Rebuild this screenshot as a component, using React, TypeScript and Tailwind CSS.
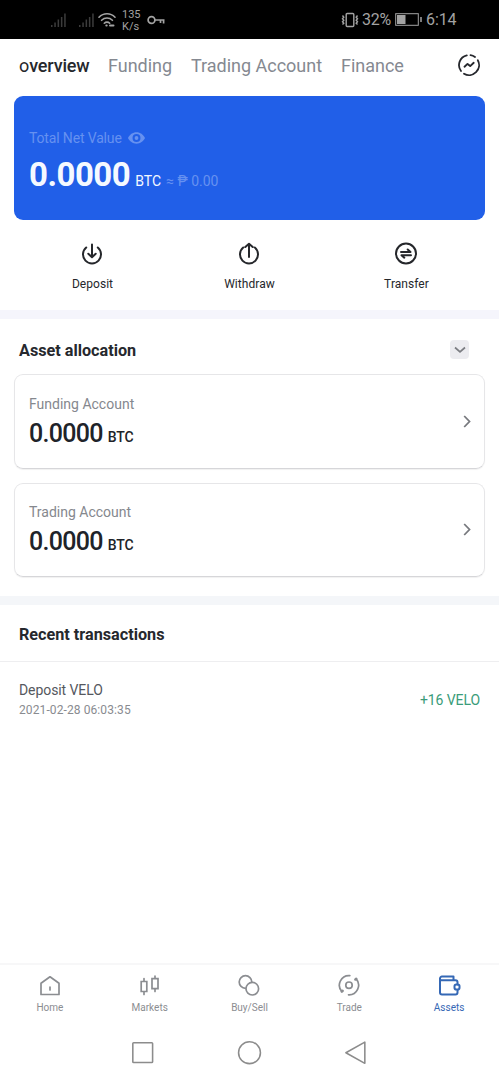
import type { ReactNode } from 'react'

const TABS = ['Funding', 'Trading Account', 'Finance']

const ACCOUNTS = [
  { name: 'Funding Account', amount: '0.0000' },
  { name: 'Trading Account', amount: '0.0000' },
]

interface IconProps {
  className?: string
  children: ReactNode
}

function Icon({ className = 'h-6 w-6', children }: IconProps) {
  return (
    <svg
      viewBox="0 0 24 24"
      className={className}
      fill="none"
      stroke="currentColor"
      strokeWidth={2}
      strokeLinecap="round"
      strokeLinejoin="round"
    >
      {children}
    </svg>
  )
}

function Signal() {
  return (
    <svg viewBox="0 0 16 16" className="h-4 w-4 text-[#3c3c3c]" fill="currentColor">
      <path d="M0 13h1.500v2H0zM3.300 10.500h1.500v4.500H3.300zM6.600 7.500h1.500V15H6.600zM9.900 5h1.500v10H9.900zM13.200 1.500h1.500V15h-1.500z" />
    </svg>
  )
}

function StatusBar() {
  return (
    <div className="flex h-[39px] items-center bg-black pl-[51px] pr-[42px] text-[#a3a3a3]">
      <Signal />
      <div className="w-3" />
      <Signal />
      <svg viewBox="0 0 18 16" className="ml-[3px] h-4 w-[18px]" fill="none" stroke="currentColor" strokeWidth="1.600" strokeLinecap="round">
        <path d="M1 5.200C5.500.6 12.500.6 17 5.200M3.600 8.300c3-3 7.800-3 10.800 0M6.300 11.200c1.500-1.500 3.900-1.500 5.400 0" />
        <path d="M8.300 13.600h.4M12 13.600h3.500" strokeWidth="2" />
      </svg>
      <div className="ml-[6px] mt-[2px] w-[20px] text-[11px] leading-[12px]">
        <div>135</div>
        <div>K/s</div>
      </div>
      <svg viewBox="0 0 18 10" className="ml-[5px] h-[10px] w-[18px]" fill="none" stroke="currentColor" strokeWidth="1.700">
        <circle cx="4.500" cy="5" r="3.400" />
        <path d="M8 5h9.500M13.500 5v3M16.600 5v3.500" />
      </svg>
      <div className="flex-1" />
      <svg viewBox="0 0 18 16" className="h-4 w-[18px]" fill="none" stroke="currentColor" strokeWidth="1.400">
        <rect x="5.200" y="1.500" width="7.600" height="13" rx="1" />
        <path d="M1.500 3.500l1.300 1.700-1.300 1.500 1.300 1.500-1.300 1.600 1.300 1.500-1.300 1.200M16.500 3.500l-1.300 1.700 1.300 1.500-1.300 1.500 1.300 1.600-1.300 1.500 1.300 1.200" />
      </svg>
      <span className="ml-[3px] w-[30px] whitespace-nowrap pt-px text-[16px] tracking-[-0.300px]">32%</span>
      <svg viewBox="0 0 27 13" className="ml-[3px] h-[13px] w-[27px]" fill="none" stroke="currentColor">
        <rect x=".7" y=".7" width="22.600" height="11.600" strokeWidth="1" />
        <path d="M2 2h8.500v9H2z" fill="currentColor" stroke="none" />
        <path d="M26 4v5" strokeWidth="1.500" />
      </svg>
      <span className="ml-[4px] w-[31px] whitespace-nowrap pt-px text-[16px] tracking-[-0.100px]">6:14</span>
    </div>
  )
}

function TopTabs() {
  return (
    <div className="flex h-[57px] items-center whitespace-nowrap pb-[5px] pl-[19px] pr-[18px] text-[18px] text-[#858991]">
      <span className="w-[89px] tracking-[-0.150px] text-[#26282d]">
        o<span className="font-medium">verview</span>
      </span>
      {TABS.map((tab) => (
        <span key={tab} className="mr-[19px] tracking-[-0.020px]">{tab}</span>
      ))}
      <Icon className="ml-auto h-6 w-6 text-[#25272c]">
        <path d="M9.800 2.300A10 10 0 0 0 4 18M7 20.700A10 10 0 0 0 20.800 7.200M13.500 2.200A10 10 0 0 1 18 4" strokeWidth="1.800" />
        <path d="M7.500 13.700l3-2.800 2.700 2.200 3.500-3.300" strokeWidth="1.900" />
      </Icon>
    </div>
  )
}

function NetValueCard() {
  return (
    <div className="mx-[14px] h-[124px] rounded-[9px] bg-[#215fe8] pl-[15px] pt-[34px]">
      <div className="flex h-4 items-center text-[14px] tracking-[-0.150px] text-[#6691f0]">
        <span>Total Net Value</span>
        <svg viewBox="0 0 18 12" className="ml-[6px] h-3 w-[17px]">
          <path fill="currentColor" fillRule="evenodd" d="M9 0c4 0 7.300 2.500 9 6-1.700 3.500-5 6-9 6S1.700 9.500 0 6c1.700-3.500 5-6 9-6zm0 1.800a4.200 4.200 0 1 0 0 8.400 4.200 4.200 0 0 0 0-8.400zM9 4a2 2 0 1 1 0 4 2 2 0 0 1 0-4z" />
        </svg>
      </div>
      <div className="mt-[9px] flex items-baseline whitespace-nowrap text-[#f5f9ff]">
        <span className="text-[33px] font-bold leading-[40px] tracking-[-0.500px]">0.0000</span>
        <span className="ml-[5px] text-[14px]">BTC</span>
        <span className="ml-[5px] text-[14px] text-[#6691f0]">≈ ₱ 0.00</span>
      </div>
    </div>
  )
}

interface ActionProps {
  label: string
  children: ReactNode
}

function Action({ label, children }: ActionProps) {
  return (
    <button className="flex flex-1 flex-col items-center text-[#25272b]">
      <Icon className="mr-px h-6 w-6">{children}</Icon>
      <span className="mt-[10px] text-[12px] leading-4 tracking-[0.050px]">{label}</span>
    </button>
  )
}

function Actions() {
  return (
    <div className="flex h-[90px] px-[14px] pt-[22px]">
      <Action label="Deposit">
        <path d="M6.200 5.500a9 9 0 1 0 11.600 0M12 2.500V15M8.300 11.800L12 15.200l3.700-3.400" />
      </Action>
      <Action label="Withdraw">
        <path d="M6.200 5.500a9 9 0 1 0 11.600 0M12 15V2M8.300 5L12 1.700 15.700 5" />
      </Action>
      <Action label="Transfer">
        <circle cx="12" cy="11.500" r="10" />
        <path d="M7 10h9.500l-2.800-2.500M17 13.200H7.500l2.800 2.500" />
      </Action>
    </div>
  )
}

function AccountCard({ name, amount }: { name: string; amount: string }) {
  return (
    <div className="mx-[14px] mb-[14px] flex h-[94.500px] items-center justify-between rounded-[9px] border border-[#e6e6e8] border-b-[#d6d6d9] pl-[14px] pr-[13px] shadow-[0_1px_1px_rgba(0,0,0,0.06)]">
      <div className="pt-[4px]">
        <div className="text-[14px] leading-4 text-[#85888e]">{name}</div>
        <div className="mt-[5px] flex items-baseline text-[#202329]">
          <span className="text-[25px] font-medium leading-[34px] tracking-[-0.700px]">{amount}</span>
          <span className="ml-[5px] text-[14px] font-medium tracking-[-0.100px]">BTC</span>
        </div>
      </div>
      <svg viewBox="0 0 8 13" className="h-[13px] w-2 text-[#77797e]" fill="none" stroke="currentColor" strokeWidth="1.800">
        <path d="M1.200 1l5.300 5.500L1.200 12" />
      </svg>
    </div>
  )
}

function NavItem({ label, active, children }: ActionProps & { active?: boolean }) {
  return (
    <button className={`flex flex-1 flex-col items-center ${active ? 'text-[#3568b5]' : 'text-[#8b8d91]'}`}>
      <Icon>{children}</Icon>
      <span className="mt-[4px] text-[10px] leading-[14px]">{label}</span>
    </button>
  )
}

function BottomNav() {
  return (
    <div className="flex h-[59px] border-t-2 border-[#f7f7f8] pt-[8px]">
      <NavItem label="Home">
        <path d="M3 10.300L12 3.800l9 6.500V21.500H3zM12 14v3" strokeWidth="1.700" />
      </NavItem>
      <NavItem label="Markets">
        <path d="M3.200 8.500h5.600v10H3.200zM14 5.700h6v10h-6zM6 5.500v3M6 18.500v3M17 3v2.700M17 15.700v2.800" strokeWidth="1.700" strokeLinejoin="miter" />
      </NavItem>
      <NavItem label="Buy/Sell">
        <circle cx="8.500" cy="9" r="6.300" strokeWidth="1.700" />
        <circle cx="15.300" cy="15.700" r="6.300" fill="white" strokeWidth="1.700" />
      </NavItem>
      <NavItem label="Trade">
        <circle cx="12" cy="12.200" r="3.200" strokeWidth="1.700" />
        <path d="M12.800 2.600A9.600 9.600 0 0 0 4.800 18.500M11.500 21.800A9.600 9.600 0 0 0 19.200 5.900" strokeWidth="1.700" />
        <path d="M4.800 18.500l.8-.6M19.200 5.900l-.8.600" strokeWidth="2.600" />
      </NavItem>
      <NavItem label="Assets" active>
        <path d="M3 5.500V19.500a2 2 0 0 0 2 2h13.500a2 2 0 0 0 2-2V17M20.500 11.500V9.200a2 2 0 0 0-2-2H4.500A1.500 1.500 0 0 1 3 5.500 2 2 0 0 1 5 3.500h11.500V7" />
        <rect x="17.500" y="11.500" width="5" height="5" rx="1.800" />
      </NavItem>
    </div>
  )
}

function SystemNav() {
  return (
    <div className="flex h-[58px] items-start justify-center gap-[82px] pt-[18px] text-[#8c8c8c]">
      <Icon className="h-[25px] w-[25px]">
        <rect x="2.700" y="2.600" width="19" height="19" rx=".8" strokeWidth="1.500" />
      </Icon>
      <Icon className="h-[25px] w-[25px]">
        <circle cx="12" cy="12.200" r="10.500" strokeWidth="1.500" />
      </Icon>
      <Icon className="h-[25px] w-[25px]">
        <path d="M20 2v20.400L1.800 12.200z" strokeWidth="1.500" />
      </Icon>
    </div>
  )
}

export default function App() {
  return (
    <div className="flex h-[1080px] w-[499px] flex-col overflow-hidden bg-white font-['Roboto',sans-serif]">
      <StatusBar />
      <TopTabs />
      <NetValueCard />
      <Actions />

      <div className="h-[9px] bg-[#f5f5fc]" />
      <div className="flex h-[55px] items-center justify-between pl-[19px] pr-[30px] pt-[6px]">
        <h2 className="pt-[3px] text-[16.200px] font-bold text-[#26282d]">Asset allocation</h2>
        <span className="flex h-[19px] w-[19px] items-center justify-center rounded-[4px] bg-[#ececf0]">
          <svg viewBox="0 0 12 8" className="h-2 w-3 text-[#7b7d82]" fill="none" stroke="currentColor" strokeWidth="1.700">
            <path d="M1 1.500l5 4.300 5-4.300" />
          </svg>
        </span>
      </div>
      {ACCOUNTS.map((account) => (
        <AccountCard key={account.name} {...account} />
      ))}

      <div className="mt-[5px] h-[9px] bg-[#f4f6f9]" />
      <h2 className="flex h-[57px] items-center border-b border-[#eeeef0] pl-[19px] pt-[4px] text-[16.200px] font-bold text-[#26282d]">
        Recent transactions
      </h2>
      <div className="flex items-center justify-between pl-[19px] pr-[19px] pt-[19px]">
        <div>
          <div className="text-[14px] leading-[18px] tracking-[-0.080px] text-[#55585e]">Deposit VELO</div>
          <div className="mt-[3px] text-[12px] leading-4 tracking-[0.100px] text-[#898b90]">2021-02-28 06:03:35</div>
        </div>
        <span className="pt-px text-[14px] tracking-[-0.080px] text-[#3a9c79]">+16 VELO</span>
      </div>

      <div className="flex-1" />
      <BottomNav />
      <SystemNav />
    </div>
  )
}
